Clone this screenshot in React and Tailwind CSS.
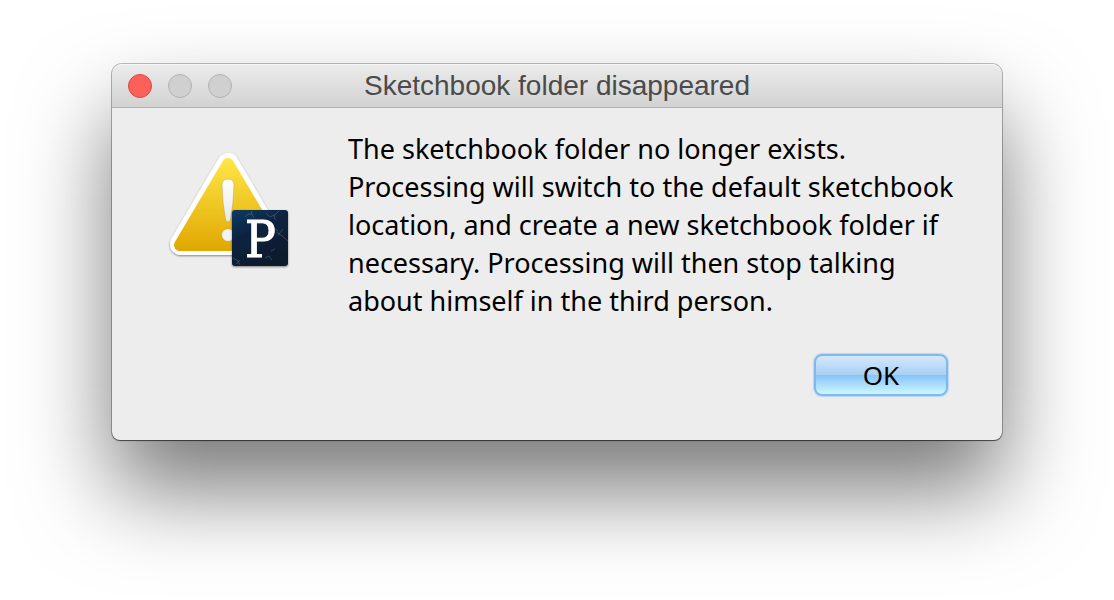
function WarningIcon() {
  return (
    <svg className="h-32 w-32 shrink-0" viewBox="0 0 128 128" role="img" aria-label="Warning">
      <defs>
        <linearGradient id="caution" gradientUnits="userSpaceOnUse" x1="0" y1="6" x2="0" y2="100">
          <stop offset="0" stopColor="#ffe748" />
          <stop offset="1" stopColor="#e0a600" />
        </linearGradient>
        <linearGradient id="mark" x1="0" y1="0" x2="0" y2="1">
          <stop offset="0" stopColor="#ffffff" />
          <stop offset="1" stopColor="#e8e8e8" />
        </linearGradient>
        <linearGradient id="badge" x1="0" y1="0" x2="0.5" y2="1">
          <stop offset="0" stopColor="#123c66" />
          <stop offset="0.45" stopColor="#0a2340" />
          <stop offset="1" stopColor="#0a1c2c" />
        </linearGradient>
        <filter id="drop" x="-20%" y="-20%" width="140%" height="140%">
          <feDropShadow dx="0" dy="1" stdDeviation="1.2" floodColor="#000" floodOpacity="0.45" />
        </filter>
      </defs>
      <path
        d="M62 12 L15 92 H109 Z"
        fill="#fff"
        stroke="#fff"
        strokeWidth="22"
        strokeLinejoin="round"
        filter="url(#drop)"
      />
      <path
        d="M62 12 L14 93 H110 Z"
        fill="url(#caution)"
        stroke="url(#caution)"
        strokeWidth="12"
        strokeLinejoin="round"
      />
      <path
        d="M56 33 Q56 27 62 27 Q68 27 68 33 Q67.500 52 64.500 67 Q64 70 62 70 Q60 70 59.500 67 Q56.500 52 56 33 Z"
        fill="url(#mark)"
        stroke="#a88717"
        strokeOpacity="0.5"
        strokeWidth="0.700"
      />
      <circle cx="62" cy="83" r="6.300" fill="#f3f3f3" stroke="#a88717" strokeOpacity="0.5" strokeWidth="0.700" />
      <g filter="url(#drop)">
        <rect x="66" y="58" width="56" height="56" rx="3" fill="url(#badge)" />
      </g>
      <g fill="none" stroke="#91a4b4" strokeOpacity="0.3" strokeWidth="1">
        <path d="M79 65 l3 -3 l4 0 l2 4 M85 62 l1 -3" />
        <path d="M100 61 l4 4 l6 -3 l3 -3 M108 63 l1 5" />
        <path d="M110 80 l5 3 l7 6 M112 83 l5 -6 M108 76 l4 3" />
        <path d="M67 106 l5 3 l2 4 M70 112 l4 -4" />
        <path d="M99 106 l4 -2 l3 4 M105 99 l4 -2" />
      </g>
      <text
        x="79"
        y="105"
        fill="#fff"
        stroke="#fff"
        strokeWidth="1"
        fontSize="51"
        fontFamily="'DejaVu Serif Condensed', 'DejaVu Serif', serif"
      >
        P
      </text>
    </svg>
  );
}

export default function App() {
  return (
    <main className="min-h-screen overflow-hidden bg-white px-6 pt-16 pb-40">
      <section
        role="dialog"
        aria-labelledby="dialog-title"
        aria-describedby="dialog-message"
        className="mx-auto max-w-[890px] rounded-t-[10px] rounded-b-lg bg-[#ededed] shadow-[0_0_0_1px_rgba(0,0,0,0.25),0_1px_1px_rgba(0,0,0,0.5),0_50px_90px_rgba(0,0,0,0.53)]"
      >
        <header className="grid h-11 grid-cols-[1fr_auto_1fr] items-center rounded-t-[10px] border-t border-b border-t-[#f7f7f7] border-b-[#b1b1b1] bg-linear-to-b from-[#ebebeb] to-[#d2d2d2] px-4">
          <div className="flex gap-4">
            <button type="button" aria-label="Close" className="size-6 rounded-full border border-[#e24640] bg-[#fc605b]" />
            <button type="button" aria-label="Minimize" disabled className="size-6 rounded-full border border-[#b2b2b2] bg-[#d0d0d0]" />
            <button type="button" aria-label="Zoom" disabled className="size-6 rounded-full border border-[#b2b2b2] bg-[#d0d0d0]" />
          </div>
          <h1 id="dialog-title" className="font-['Liberation_Sans',Arial,sans-serif] text-[28px] leading-8 text-[#4b4b4b]">
            Sketchbook folder disappeared
          </h1>
        </header>
        <div className="pt-[22px] pr-8 pb-11 pl-[54px] font-['Noto_Sans',sans-serif] text-[27px] text-black">
          <div className="flex items-start gap-[54px]">
            <div className="pt-[22px]">
              <WarningIcon />
            </div>
            <p id="dialog-message" className="min-w-0 flex-1 leading-[38px]">
              The sketchbook folder no longer exists.
              <br />
              Processing will switch to the default sketchbook location, and create a new sketchbook folder if necessary.
              Processing will then stop talking about himself in the third person.
            </p>
          </div>
          <div className="mt-[34px] flex justify-end pr-[22px]">
            <button
              type="button"
              className="flex h-[42px] w-[134px] items-center justify-center rounded-lg border-2 border-[#82b8ec] bg-[linear-gradient(to_bottom,#d5e8fb_0%,#a8cff6_50%,#85c2f8_50%,#cdf8ff_100%)] text-[26px] leading-8 shadow-[0_0_1px_1px_rgba(150,200,245,0.6)]"
            >
              OK
            </button>
          </div>
        </div>
      </section>
    </main>
  );
}
